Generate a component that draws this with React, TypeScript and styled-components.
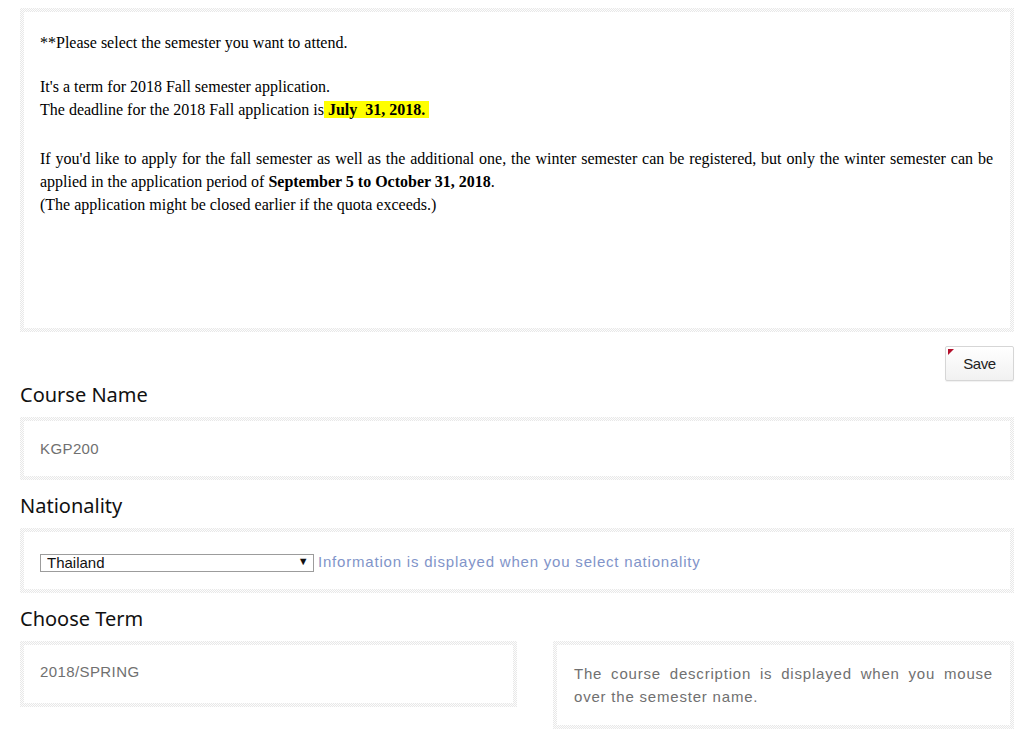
import React from 'react';
import styled, { createGlobalStyle } from 'styled-components';

const GlobalStyle = createGlobalStyle`
  html, body {
    margin: 0;
    padding: 0;
    background: #fff;
  }
  body {
    font-family: "Liberation Sans", Arial, sans-serif;
    color: #111;
  }
`;

const Page = styled.div`
  padding: 8px 10px 0 20px;
`;

const Box = styled.div<{ $height?: number }>`
  box-sizing: border-box;
  border: 4px solid transparent;
  background:
    linear-gradient(#fff, #fff) padding-box,
    repeating-conic-gradient(#e8e8e8 0% 25%, #fdfdfd 0% 50%) 0 0 / 2px 2px border-box;
  height: ${(p) => (p.$height ? `${p.$height}px` : 'auto')};
`;

const Notice = styled(Box)`
  padding: 19px 17px 0 16px;
  font-family: "Liberation Serif", "Times New Roman", serif;
  font-size: 16px;
  line-height: 23px;
  color: #000;
`;

const Paragraph = styled.p<{ $after?: number }>`
  margin: 0 0 ${(p) => p.$after ?? 0}px;
  text-align: justify;
`;

const Highlight = styled.b`
  background: #ffff00;
`;

const SaveRow = styled.div`
  display: flex;
  justify-content: flex-end;
  margin-top: 14px;
`;

const SaveButton = styled.button`
  position: relative;
  width: 69px;
  height: 35px;
  padding: 0;
  border: 1px solid #d6d6d6;
  border-radius: 2px;
  background: linear-gradient(#ffffff, #f1f1f1);
  box-shadow: 0 1px 1px rgba(0, 0, 0, 0.06);
  font-family: "Liberation Sans", Arial, sans-serif;
  font-size: 15px;
  letter-spacing: -0.4px;
  color: #222;
  cursor: pointer;

  &::before {
    content: "";
    position: absolute;
    top: 2px;
    left: 2px;
    border-top: 6px solid #b3102c;
    border-right: 6px solid transparent;
  }
`;

const Heading = styled.h2<{ $top?: number }>`
  margin: ${(p) => p.$top ?? 0}px 0 8px;
  font-family: "Noto Sans", "Open Sans", sans-serif;
  font-size: 20px;
  font-weight: 400;
  line-height: 28px;
  color: #111;
`;

const Field = styled(Box)`
  padding: 17px 16px;
  font-size: 15px;
  letter-spacing: 0.4px;
  line-height: 21px;
  color: #707070;
`;

const SelectLine = styled.div`
  display: flex;
  align-items: center;
  gap: 4px;
  height: 22px;
  padding-top: 1px;
`;

const SelectWrap = styled.div`
  position: relative;
  width: 274px;
  height: 18px;
`;

const NativeSelect = styled.select`
  appearance: none;
  box-sizing: border-box;
  width: 100%;
  height: 18px;
  margin: 0;
  padding: 0 0 0 6px;
  border: 1px solid #9c9c9c;
  border-radius: 0;
  background: #fff;
  font-family: "Liberation Sans", Arial, sans-serif;
  font-size: 15px;
  line-height: 16px;
  color: #111;
`;

const Arrow = styled.span`
  position: absolute;
  right: 5px;
  top: 2px;
  font-size: 11px;
  line-height: 14px;
  color: #111;
  pointer-events: none;
`;

const InfoText = styled.span`
  font-size: 15px;
  letter-spacing: 0.8px;
  color: #8194c9;
`;

const TermRow = styled.div`
  display: grid;
  grid-template-columns: 497px 1fr;
  column-gap: 36px;
  align-items: start;
`;

const TermBox = styled(Box)`
  padding: 16px 16px 20px;
  font-size: 15px;
  letter-spacing: 0.4px;
  line-height: 22px;
  color: #707070;
`;

const TermDesc = styled(Box)`
  padding: 17px;
  font-size: 15px;
  letter-spacing: 0.8px;
  line-height: 23px;
  color: #707070;
  text-align: justify;
`;

export default function App() {
  return (
    <>
      <GlobalStyle />
      <Page>
        <Notice $height={324}>
          <Paragraph $after={21}>**Please select the semester you want to attend.</Paragraph>
          <Paragraph $after={26}>
            It's a term for 2018 Fall semester application.
            <br />
            The deadline for the 2018 Fall application is
            <Highlight> July&nbsp; 31, 2018.&nbsp;</Highlight>
          </Paragraph>
          <Paragraph>
            If you'd like to apply for the fall semester as well as the additional one, the winter
            semester can be registered, but only the winter semester can be applied in the
            application period of <b>September 5 to October 31, 2018</b>.
            <br />
            (The application might be closed earlier if the quota exceeds.)
          </Paragraph>
        </Notice>

        <SaveRow>
          <SaveButton type="button">Save</SaveButton>
        </SaveRow>

        <Heading>Course Name</Heading>
        <Field>KGP200</Field>

        <Heading $top={12}>Nationality</Heading>
        <Field>
          <SelectLine>
            <SelectWrap>
              <NativeSelect defaultValue="Thailand">
                <option>Thailand</option>
                <option>Korea</option>
                <option>Japan</option>
                <option>China</option>
              </NativeSelect>
              <Arrow>▼</Arrow>
            </SelectWrap>
            <InfoText>Information is displayed when you select nationality</InfoText>
          </SelectLine>
        </Field>

        <Heading $top={12}>Choose Term</Heading>
        <TermRow>
          <TermBox>2018/SPRING</TermBox>
          <TermDesc>
            The course description is displayed when you mouse over the semester name.
          </TermDesc>
        </TermRow>
      </Page>
    </>
  );
}
